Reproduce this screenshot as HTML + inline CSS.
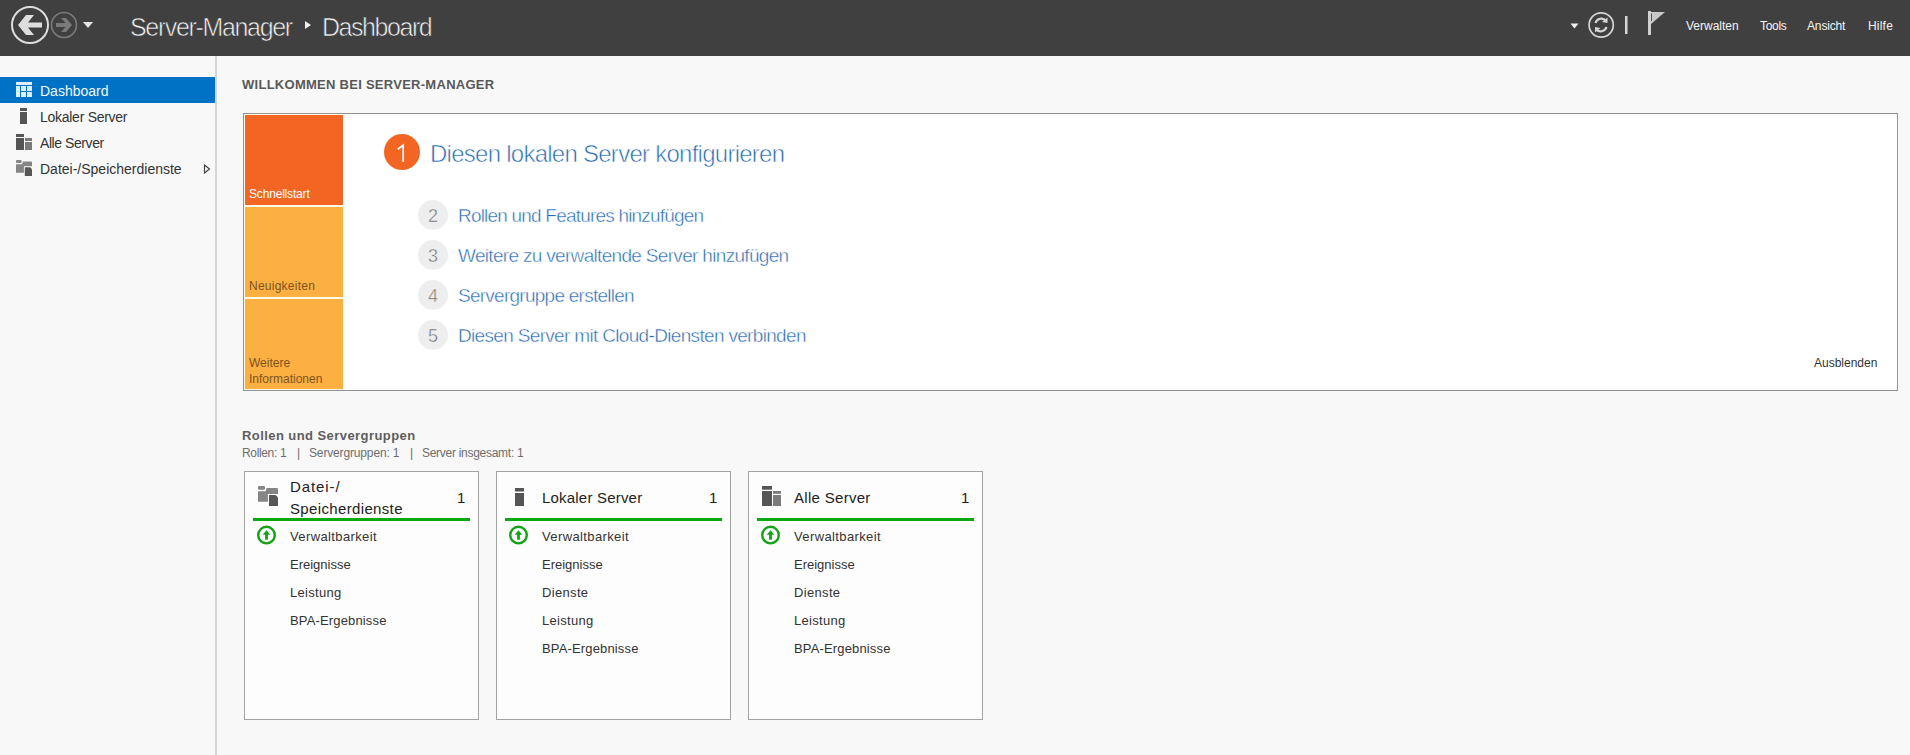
<!DOCTYPE html>
<html><head><meta charset="utf-8">
<style>
*{margin:0;padding:0;box-sizing:border-box}
html,body{width:1910px;height:755px;overflow:hidden;background:#f8f8f8;font-family:"Liberation Sans",sans-serif;color:#333}
.a{position:absolute;white-space:nowrap}
#hdr{position:absolute;left:0;top:0;width:1910px;height:56px;background:#404040}
#side{position:absolute;left:0;top:56px;width:215px;height:699px;background:#f8f8f8}
#sep{position:absolute;left:215px;top:56px;width:2px;height:699px;background:#d4d4d4}
.t{position:absolute;white-space:nowrap;line-height:1}
</style></head>
<body>
<div id="hdr">
  <svg class="a" style="left:0;top:0" width="120" height="56" viewBox="0 0 120 56">
    <circle cx="30" cy="25" r="18" fill="none" stroke="#dedede" stroke-width="2"/>
    <path d="M18 25 L26 15 L34 15 L28 22.5 L42 22.5 L42 27.5 L28 27.5 L34 35 L26 35 Z" fill="#dedede"/>
    <circle cx="64" cy="25" r="12.5" fill="none" stroke="#7a7a7a" stroke-width="1.6"/>
    <path d="M72 25 L66 18 L61 18 L65.5 23 L56 23 L56 27 L65.5 27 L61 32 L66 32 Z" fill="#7a7a7a"/>
    <path d="M83 22 L93 22 L88 28 Z" fill="#e6e6e6"/>
  </svg>
  <div class="t" style="left:130px;top:15px;font-size:25px;letter-spacing:-1.35px;color:#f2f2f2;-webkit-text-stroke:0.6px #404040">Server-Manager</div>
  <svg class="a" style="left:304px;top:21px" width="8" height="8"><path d="M1 0 L7 4 L1 8 Z" fill="#f0f0f0"/></svg>
  <div class="t" style="left:322px;top:15px;font-size:25px;letter-spacing:-1.45px;color:#f2f2f2;-webkit-text-stroke:0.6px #404040">Dashboard</div>

  <svg class="a" style="left:1560px;top:0" width="120" height="56" viewBox="0 0 120 56">
    <path d="M10.5 23.5 L18.5 23.5 L14.5 28.5 Z" fill="#f0f0f0"/>
    <circle cx="41.2" cy="25" r="12.1" fill="none" stroke="#d6d6d6" stroke-width="1.7"/>
    <path d="M35.5 23 A6 6 0 0 1 46 21 M46.5 27 A6 6 0 0 1 36 29" fill="none" stroke="#d6d6d6" stroke-width="2.2"/>
    <path d="M47.5 17.5 L47.5 23 L42 22 Z M35 32.5 L35 27 L40.5 28 Z" fill="#d6d6d6"/>
    <rect x="65" y="16" width="2.5" height="18" fill="#d6d6d6"/>
    <rect x="88" y="11" width="3" height="24" fill="#d0d0d0"/>
    <path d="M91 12 L105 12 L91 24 Z" fill="#c8c8c8"/>
    <rect x="91" y="13.5" width="1" height="7.5" fill="#555"/>
  </svg>
  <div class="t" style="left:1686px;top:20px;font-size:12px;color:#f4f4f4">Verwalten</div>
  <div class="t" style="left:1760px;top:20px;font-size:12px;letter-spacing:-0.3px;color:#f4f4f4">Tools</div>
  <div class="t" style="left:1807px;top:20px;font-size:12px;letter-spacing:-0.15px;color:#f4f4f4">Ansicht</div>
  <div class="t" style="left:1868px;top:20px;font-size:12px;letter-spacing:0.2px;color:#f4f4f4">Hilfe</div>
</div>

<div id="sep"></div>
<div id="side">
  <div class="a" style="left:0;top:21px;width:215px;height:26px;background:#0072c6"></div>
  <svg class="a" style="left:16px;top:26px" width="16" height="15" viewBox="0 0 16 15" fill="#dcefff">
    <rect x="0" y="0" width="16" height="3"/>
    <rect x="0" y="4" width="4" height="11"/>
    <rect x="5" y="4" width="5" height="5"/><rect x="11" y="4" width="5" height="5"/>
    <rect x="5" y="10" width="5" height="5"/><rect x="11" y="10" width="5" height="5"/>
  </svg>
  <div class="t" style="left:40px;top:28px;font-size:14px;color:#f0f8ff">Dashboard</div>

  <svg class="a" style="left:16px;top:52px" width="16" height="18" viewBox="0 0 16 18">
    <rect x="4" y="0" width="7" height="3" fill="#555"/>
    <rect x="4" y="4" width="7" height="12" fill="#555"/>
  </svg>
  <div class="t" style="left:40px;top:54px;font-size:14px;letter-spacing:-0.27px;color:#333">Lokaler Server</div>

  <svg class="a" style="left:16px;top:78px" width="16" height="16" viewBox="0 0 16 16">
    <rect x="0" y="0" width="8" height="3" fill="#555"/>
    <rect x="0" y="4" width="8" height="12" fill="#555"/>
    <rect x="9" y="4" width="7" height="3" fill="#7a7a7a"/>
    <rect x="9" y="8" width="7" height="8" fill="#7a7a7a"/>
  </svg>
  <div class="t" style="left:40px;top:80px;font-size:14px;letter-spacing:-0.43px;color:#333">Alle Server</div>

  <svg class="a" style="left:16px;top:104px" width="16" height="16" viewBox="0 0 20 20">
<rect x="0" y="0" width="7" height="3.8" rx="1.2" fill="#858585"/>
<path d="M0 5.3 L7.6 5.3 L8.6 2 L19 2 Q20 2 20 3 L20 8 L10 8 L10 15.8 L0 15.8 Z" fill="#858585"/>
<rect x="9.9" y="8" width="10.1" height="12" fill="#f8f8f8"/>
<path d="M11 9.1 L17.3 9.1 L20 11.8 L20 20 L11 20 Z" fill="#575757"/>
<path d="M17.6 9.1 L17.6 11.5 L20 11.5 Z" fill="#575757"/></svg>
  <div class="t" style="left:40px;top:106px;font-size:14px;color:#333">Datei-/Speicherdienste</div>
  <svg class="a" style="left:203px;top:108px" width="8" height="10" viewBox="0 0 8 10"><path d="M1.5 1 L6.5 5 L1.5 9 Z" fill="none" stroke="#444" stroke-width="1.2"/></svg>
</div>

<div class="t" style="left:242px;top:78px;font-size:13px;font-weight:bold;letter-spacing:0.27px;color:#585858">WILLKOMMEN BEI SERVER-MANAGER</div>

<!-- welcome box -->
<div class="a" style="left:243px;top:113px;width:1655px;height:278px;background:#fff;border:1px solid #939393"></div>
<div class="a" style="left:244px;top:114px;width:100px;height:276px;background:#fffbe8"></div>
<div class="a" style="left:245px;top:115px;width:98px;height:90px;background:#f26522"></div>
<div class="a" style="left:245px;top:207px;width:98px;height:90px;background:#fcb042"></div>
<div class="a" style="left:245px;top:299px;width:98px;height:90px;background:#fcb042"></div>
<div class="t" style="left:249px;top:188px;font-size:12px;letter-spacing:-0.18px;color:#fff">Schnellstart</div>
<div class="t" style="left:249px;top:280px;font-size:12px;letter-spacing:0.25px;color:#7d5420">Neuigkeiten</div>
<div class="t" style="left:249px;top:355px;font-size:12px;line-height:16px;color:#7d5420">Weitere<br>Informationen</div>

<div class="a" style="left:384px;top:134px;width:36px;height:36px;border-radius:50%;background:#f26522"></div>
<svg class="a" style="left:384px;top:134px" width="36" height="36"><path d="M13.8 15.2 L19.2 11.2 L19.2 28" fill="none" stroke="#fff" stroke-width="1.7"/></svg>
<div class="t" style="left:430px;top:142px;font-size:24px;letter-spacing:-0.74px;color:#2468b0;-webkit-text-stroke:0.6px #fff">Diesen lokalen Server konfigurieren</div>

<div class="a" style="left:418px;top:200px;width:30px;height:30px;border-radius:50%;background:#eeeeee"></div>
<div class="t" style="left:428px;top:207px;font-size:18px;color:#666;-webkit-text-stroke:0.5px #eeeeee">2</div>
<div class="t" style="left:458px;top:206px;font-size:19px;letter-spacing:-0.8px;color:#2468b0;-webkit-text-stroke:0.45px #fff">Rollen und Features hinzufügen</div>
<div class="a" style="left:418px;top:240px;width:30px;height:30px;border-radius:50%;background:#eeeeee"></div>
<div class="t" style="left:428px;top:247px;font-size:18px;color:#666;-webkit-text-stroke:0.5px #eeeeee">3</div>
<div class="t" style="left:458px;top:246px;font-size:19px;letter-spacing:-0.68px;color:#2468b0;-webkit-text-stroke:0.45px #fff">Weitere zu verwaltende Server hinzufügen</div>
<div class="a" style="left:418px;top:280px;width:30px;height:30px;border-radius:50%;background:#eeeeee"></div>
<div class="t" style="left:428px;top:287px;font-size:18px;color:#666;-webkit-text-stroke:0.5px #eeeeee">4</div>
<div class="t" style="left:458px;top:286px;font-size:19px;letter-spacing:-0.74px;color:#2468b0;-webkit-text-stroke:0.45px #fff">Servergruppe erstellen</div>
<div class="a" style="left:418px;top:320px;width:30px;height:30px;border-radius:50%;background:#eeeeee"></div>
<div class="t" style="left:428px;top:327px;font-size:18px;color:#666;-webkit-text-stroke:0.5px #eeeeee">5</div>
<div class="t" style="left:458px;top:326px;font-size:19px;letter-spacing:-0.67px;color:#2468b0;-webkit-text-stroke:0.45px #fff">Diesen Server mit Cloud-Diensten verbinden</div>

<div class="t" style="left:1814px;top:357px;font-size:12px;color:#333">Ausblenden</div>

<div class="t" style="left:242px;top:429px;font-size:13px;font-weight:bold;letter-spacing:0.43px;color:#5e5e5e">Rollen und Servergruppen</div>
<div class="t" style="left:242px;top:447px;font-size:12px;letter-spacing:-0.35px;color:#6e6e6e">Rollen: 1</div>
<div class="t" style="left:297px;top:447px;font-size:12px;color:#6e6e6e">|</div>
<div class="t" style="left:309px;top:447px;font-size:12px;letter-spacing:-0.15px;color:#6e6e6e">Servergruppen: 1</div>
<div class="t" style="left:410px;top:447px;font-size:12px;color:#6e6e6e">|</div>
<div class="t" style="left:422px;top:447px;font-size:12px;letter-spacing:-0.28px;color:#6e6e6e">Server insgesamt: 1</div>

<!-- CARDS -->
<div class="a" style="left:244px;top:471px;width:235px;height:249px;background:#fdfdfd;border:1px solid #a3a3a3"></div>
<svg class="a" style="left:258px;top:486px" width="20" height="20" viewBox="0 0 20 20">
<rect x="0" y="0" width="7" height="3.8" rx="1.2" fill="#858585"/>
<path d="M0 5.3 L7.6 5.3 L8.6 2 L19 2 Q20 2 20 3 L20 8 L10 8 L10 15.8 L0 15.8 Z" fill="#858585"/>
<rect x="9.9" y="8" width="10.1" height="12" fill="#fdfdfd"/>
<path d="M11 9.1 L17.3 9.1 L20 11.8 L20 20 L11 20 Z" fill="#575757"/>
<path d="M17.6 9.1 L17.6 11.5 L20 11.5 Z" fill="#575757"/></svg>
<div class="t" style="left:290px;top:476px;font-size:15px;line-height:22px;color:#222"><span style="letter-spacing:0.9px">Datei-/</span><br><span style="letter-spacing:0.35px">Speicherdienste</span></div>
<div class="t" style="left:457px;top:490px;font-size:15px;color:#222">1</div>
<div class="a" style="left:253px;top:518px;width:217px;height:3px;background:#0ba90f"></div>
<svg class="a" style="left:255px;top:524px" width="22" height="23" viewBox="0 0 22 23">
<circle cx="11.5" cy="11.1" r="8.3" fill="none" stroke="#12a414" stroke-width="2.4"/>
<path d="M11.5 6.2 L15.3 10.7 L12.9 10.7 L12.9 15.7 L10.1 15.7 L10.1 10.7 L7.7 10.7 Z" fill="#12a414"/></svg>
<div class="t" style="left:290px;top:530px;font-size:13px;letter-spacing:0.38px;color:#333">Verwaltbarkeit</div>
<div class="t" style="left:290px;top:558px;font-size:13px;color:#333">Ereignisse</div>
<div class="t" style="left:290px;top:586px;font-size:13px;letter-spacing:0.3px;color:#333">Leistung</div>
<div class="t" style="left:290px;top:614px;font-size:13px;letter-spacing:0.15px;color:#333">BPA-Ergebnisse</div>
<div class="a" style="left:496px;top:471px;width:235px;height:249px;background:#fdfdfd;border:1px solid #a3a3a3"></div>
<svg class="a" style="left:515px;top:488px" width="9" height="18" viewBox="0 0 9 18">
<rect x="0" y="0" width="9" height="3.5" fill="#555"/><rect x="0" y="5" width="9" height="13" fill="#555"/></svg>
<div class="t" style="left:542px;top:490px;font-size:15px;letter-spacing:0.2px;color:#222">Lokaler Server</div>
<div class="t" style="left:709px;top:490px;font-size:15px;color:#222">1</div>
<div class="a" style="left:505px;top:518px;width:217px;height:3px;background:#0ba90f"></div>
<svg class="a" style="left:507px;top:524px" width="22" height="23" viewBox="0 0 22 23">
<circle cx="11.5" cy="11.1" r="8.3" fill="none" stroke="#12a414" stroke-width="2.4"/>
<path d="M11.5 6.2 L15.3 10.7 L12.9 10.7 L12.9 15.7 L10.1 15.7 L10.1 10.7 L7.7 10.7 Z" fill="#12a414"/></svg>
<div class="t" style="left:542px;top:530px;font-size:13px;letter-spacing:0.38px;color:#333">Verwaltbarkeit</div>
<div class="t" style="left:542px;top:558px;font-size:13px;color:#333">Ereignisse</div>
<div class="t" style="left:542px;top:586px;font-size:13px;letter-spacing:0.33px;color:#333">Dienste</div>
<div class="t" style="left:542px;top:614px;font-size:13px;letter-spacing:0.3px;color:#333">Leistung</div>
<div class="t" style="left:542px;top:642px;font-size:13px;letter-spacing:0.15px;color:#333">BPA-Ergebnisse</div>
<div class="a" style="left:748px;top:471px;width:235px;height:249px;background:#fdfdfd;border:1px solid #a3a3a3"></div>
<svg class="a" style="left:762px;top:486px" width="19" height="20" viewBox="0 0 19 20">
<rect x="0" y="0" width="10" height="3.7" fill="#555"/><rect x="0" y="5" width="10" height="15" fill="#555"/>
<rect x="11" y="5" width="8" height="2.8" fill="#7b7b7b"/><rect x="11" y="9" width="8" height="11" fill="#7b7b7b"/></svg>
<div class="t" style="left:794px;top:490px;font-size:15px;letter-spacing:0.3px;color:#222">Alle Server</div>
<div class="t" style="left:961px;top:490px;font-size:15px;color:#222">1</div>
<div class="a" style="left:757px;top:518px;width:217px;height:3px;background:#0ba90f"></div>
<svg class="a" style="left:759px;top:524px" width="22" height="23" viewBox="0 0 22 23">
<circle cx="11.5" cy="11.1" r="8.3" fill="none" stroke="#12a414" stroke-width="2.4"/>
<path d="M11.5 6.2 L15.3 10.7 L12.9 10.7 L12.9 15.7 L10.1 15.7 L10.1 10.7 L7.7 10.7 Z" fill="#12a414"/></svg>
<div class="t" style="left:794px;top:530px;font-size:13px;letter-spacing:0.38px;color:#333">Verwaltbarkeit</div>
<div class="t" style="left:794px;top:558px;font-size:13px;color:#333">Ereignisse</div>
<div class="t" style="left:794px;top:586px;font-size:13px;letter-spacing:0.33px;color:#333">Dienste</div>
<div class="t" style="left:794px;top:614px;font-size:13px;letter-spacing:0.3px;color:#333">Leistung</div>
<div class="t" style="left:794px;top:642px;font-size:13px;letter-spacing:0.15px;color:#333">BPA-Ergebnisse</div>
</body></html>
